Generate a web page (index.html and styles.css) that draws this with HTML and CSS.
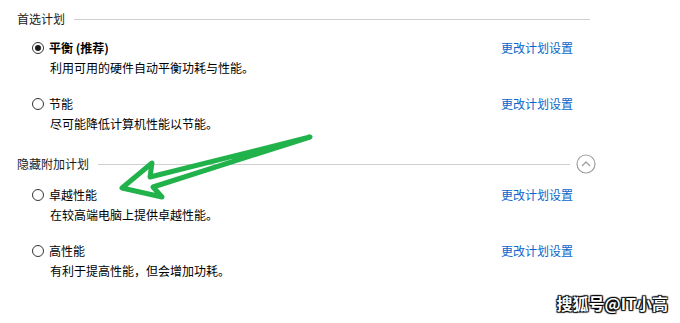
FILE: index.html
```html
<!DOCTYPE html>
<html lang="zh-CN">
  <head>
    <meta charset="UTF-8" />
    <meta name="viewport" content="width=device-width, initial-scale=1.0" />
    <title>电源选项</title>
    <link rel="stylesheet" href="styles.css">
  </head>
  <body>
    <div class="page">
      <div class="group">
        <div class="group-head">
          <span class="group-title">首选计划</span>
          <div class="rule"></div>
        </div>

        <div class="plan">
          <div class="plan-row">
            <label class="plan-name bold"><span class="radio checked"></span>平衡 (推荐)</label>
            <a class="plan-link">更改计划设置</a>
          </div>
          <div class="plan-desc">利用可用的硬件自动平衡功耗与性能。</div>
        </div>

        <div class="plan">
          <div class="plan-row">
            <label class="plan-name"><span class="radio"></span>节能</label>
            <a class="plan-link">更改计划设置</a>
          </div>
          <div class="plan-desc">尽可能降低计算机性能以节能。</div>
        </div>
      </div>

      <div class="group second">
        <div class="group-head">
          <span class="group-title">隐藏附加计划</span>
          <div class="rule short"></div>
          <span class="chevron">
            <svg width="20" height="20" viewBox="0 0 20 20">
              <circle cx="10" cy="10" r="9" fill="none" stroke="#a0a0a0" stroke-width="1.2" />
              <path d="M6 12 L10 8 L14 12" fill="none" stroke="#a0a0a0" stroke-width="1.3" />
            </svg>
          </span>
        </div>

        <div class="plan">
          <div class="plan-row">
            <label class="plan-name"><span class="radio"></span>卓越性能</label>
            <a class="plan-link">更改计划设置</a>
          </div>
          <div class="plan-desc">在较高端电脑上提供卓越性能。</div>
        </div>

        <div class="plan">
          <div class="plan-row">
            <label class="plan-name"><span class="radio"></span>高性能</label>
            <a class="plan-link">更改计划设置</a>
          </div>
          <div class="plan-desc">有利于提高性能，但会增加功耗。</div>
        </div>
      </div>
    </div>

    <!-- hand drawn annotation -->
    <svg class="arrow" width="680" height="323" viewBox="0 0 680 323">
      <path d="M310 137 L150 177 L152 163 L122 188 L162 197 L153 187 Z"
        fill="none" stroke="#22b24c" stroke-width="5" stroke-linejoin="round" stroke-linecap="round" />
    </svg>

    <div class="watermark">搜狐号@IT小高</div>
  </body>
</html>
```

FILE: styles.css
```css
*,
*::before,
*::after {
  box-sizing: border-box;
  margin: 0;
  padding: 0;
}

body {
  width: 680px;
  height: 323px;
  overflow: hidden;
  position: relative;
  background-color: #fff;
  color: #000;
  font-family: "Noto Sans CJK SC", "Microsoft YaHei", sans-serif;
  font-size: 12px;
  line-height: 20px;
}

.page {
  padding: 9px 0 0 17px;
  width: 596px;
}

.group-head {
  display: flex;
  align-items: center;
  height: 20px;
}

.group-title {
  color: #1a1a1a;
}

.rule {
  flex: 1;
  height: 1px;
  margin: 0 6px 0 9px;
  background-color: #cfcfcf;
}

.chevron {
  display: flex;
  width: 20px;
  height: 20px;
}

.plan {
  padding-left: 15px;
}

.group-head + .plan {
  margin-top: 9px;
}

.plan + .plan {
  margin-top: 16px;
}

.plan-row {
  display: grid;
  grid-template-columns: 469px auto;
  align-items: center;
}

.plan-name {
  display: flex;
  align-items: center;
  gap: 5px;
}

.bold {
  font-weight: bold;
}

.radio {
  width: 12px;
  height: 12px;
  border: 1px solid #333;
  border-radius: 50%;
  display: flex;
  align-items: center;
  justify-content: center;
}

.radio.checked::after {
  content: "";
  width: 6px;
  height: 6px;
  border-radius: 50%;
  background-color: #1a1a1a;
}

.plan-link {
  color: #0a66cc;
  cursor: pointer;
}

.plan-desc {
  padding-left: 18px;
}

.group.second {
  margin-top: 20px;
}

.group.second .group-head + .plan {
  margin-top: 11px;
}

.arrow {
  position: absolute;
  top: 0;
  left: 0;
  pointer-events: none;
}

.watermark {
  position: absolute;
  right: 12px;
  top: 291px;
  color: #fff;
  font-weight: bold;
  font-size: 16px;
  line-height: 24px;
  text-shadow: 0 0 1px #000, 1px 1px 1px #000, -1px -1px 1px #000, 1px -1px 1px #000, -1px 1px 1px #000;
}
```
